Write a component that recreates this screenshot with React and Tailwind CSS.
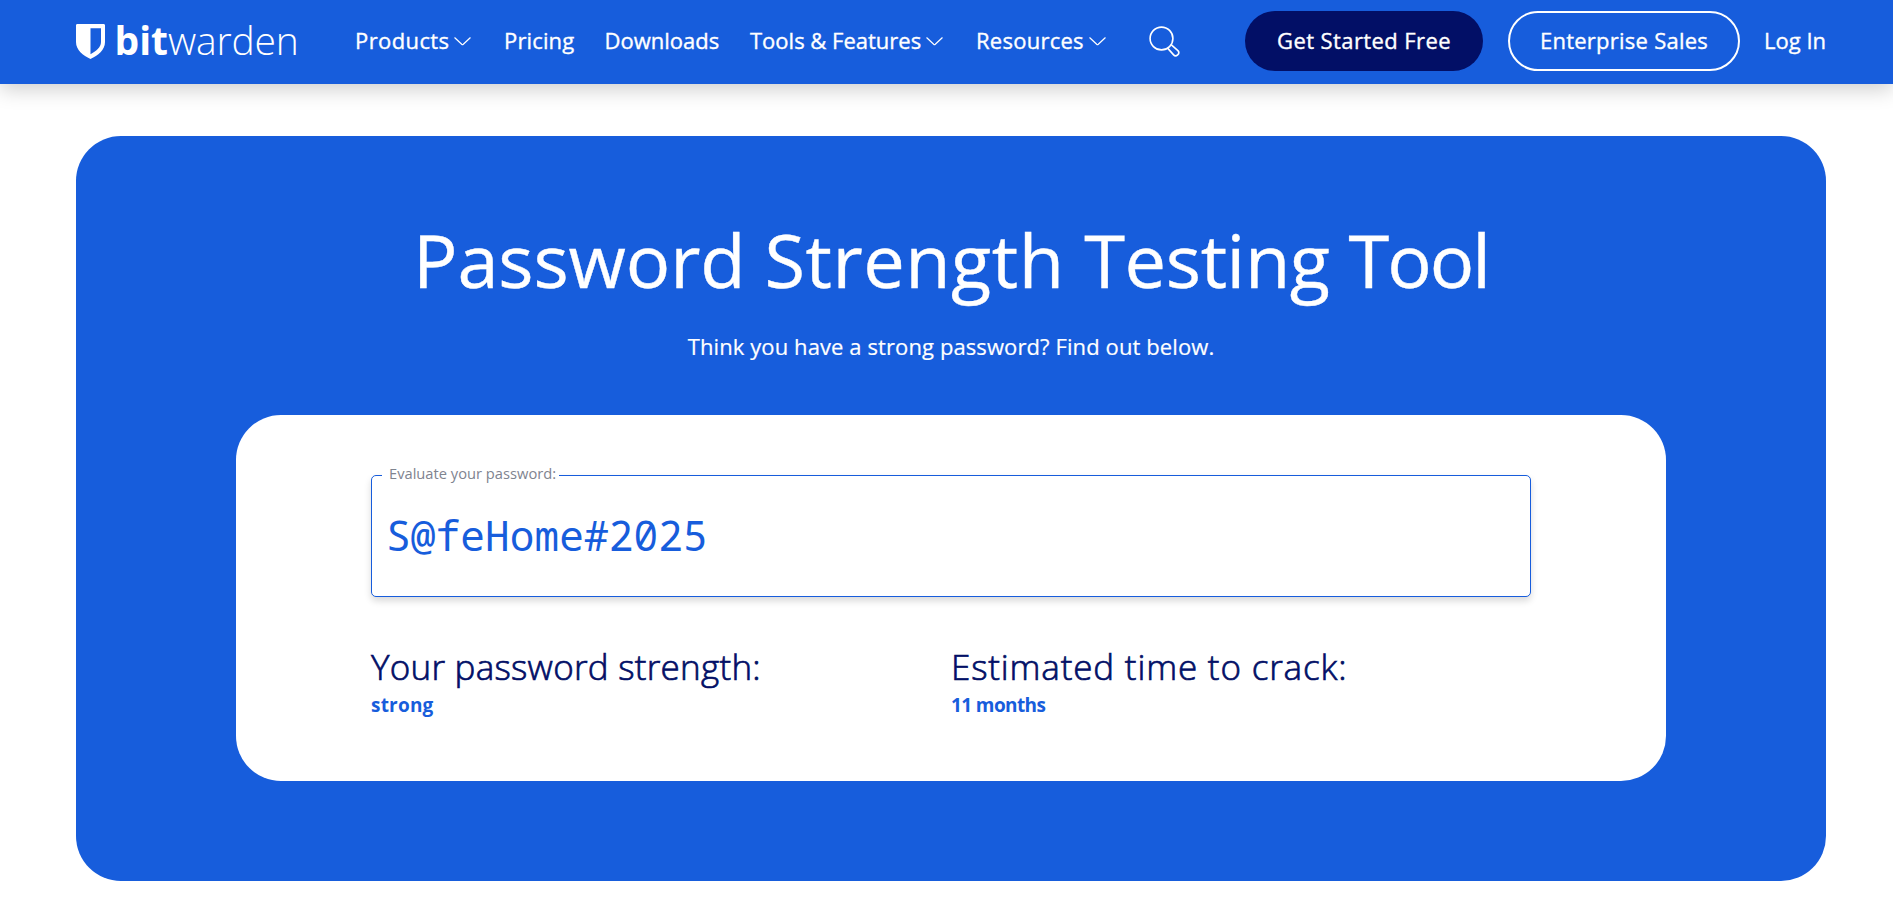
function Logo() {
  return (
    <a className="flex w-[221px] items-center whitespace-nowrap text-[39px] leading-[50px]">
      <svg className="mr-[9.5px] h-[35px] w-[29px] shrink-0" viewBox="0 0 29 35" fill="none">
        <path
          fillRule="evenodd"
          fill="white"
          d="M1.4 0H27.6C28.4 0 29 .6 29 1.4V18C29 26 22 31.600 14.500 35C7 31.600 0 26 0 18V1.400C0 .6.6 0 1.400 0ZM14.500 4.200V30.200C20 27.300 25 23.500 25 18V4.200Z"
        />
      </svg>
      <span className="-mt-[2px] font-bold">bit</span>
      <span className="-mt-[2px] font-light tracking-[-0.2px]">warden</span>
    </a>
  )
}

function Chevron() {
  return (
    <svg className="ml-[5px] h-[9px] w-[17px] shrink-0" viewBox="0 0 17 9" fill="none">
      <path d="M.8.8 7.700 7.300a1.200 1.200 0 0 0 1.600 0L16.200.8" stroke="white" strokeWidth="1.200" strokeLinecap="round" />
    </svg>
  )
}

function SearchIcon() {
  return (
    <svg className="h-[31px] w-[31px] shrink-0" viewBox="0 0 31 31" fill="none" stroke="white" strokeWidth="1.600">
      <circle cx="12.500" cy="12.500" r="11.400" />
      <path d="M18.600 22.100 24.400 28.600A2.900 2.900 0 0 0 28.900 24.600L22.100 18.600" strokeLinejoin="round" />
    </svg>
  )
}

function NavItem({ label, menu, className }) {
  return (
    <a className={`flex items-center ${className}`}>
      <span className="-mt-[2px]">{label}</span>
      {menu && <Chevron />}
    </a>
  )
}

function Result({ title, value, titleClass, valueClass }) {
  return (
    <div className="w-1/2">
      <h2 className={`text-[35px] leading-[46px] font-light whitespace-nowrap text-[#020f66] [-webkit-text-stroke:0.7px_#020f66] ${titleClass}`}>
        {title}
      </h2>
      <p className={`mt-[3px] text-[19px] leading-6 font-bold text-[#175ddc] ${valueClass}`}>{value}</p>
    </div>
  )
}

export default function App() {
  return (
    <div className="h-[912px] w-full overflow-hidden bg-white font-['Open_Sans',sans-serif]">
      <header className="relative flex h-[84px] items-center bg-[#175ddc] pb-[2px] pl-[76px] text-[22px] leading-[30px] font-medium whitespace-nowrap text-white shadow-[0_5px_20px_rgba(0,0,0,0.2)]">
        <Logo />
        <nav className="ml-[58px] flex items-center [-webkit-text-stroke:0.35px_white]">
          <NavItem label="Products" menu className="w-[149px] tracking-[0.4px]" />
          <NavItem label="Pricing" className="w-[100.5px] tracking-[0.15px]" />
          <NavItem label="Downloads" className="w-[145.5px]" />
          <NavItem label="Tools & Features" menu className="w-[226px]" />
          <NavItem label="Resources" menu className="w-[172.5px] tracking-[0.25px]" />
          <SearchIcon />
        </nav>
        <a className="ml-[65.5px] flex h-[60px] w-[238px] items-center justify-center rounded-full bg-[#020f66] pb-[2px] tracking-[0.4px] [-webkit-text-stroke:0.35px_white]">
          Get Started Free
        </a>
        <a className="ml-[25px] flex h-[60px] w-[232px] items-center justify-center rounded-full border-2 border-white pb-[2px] tracking-[0.25px] [-webkit-text-stroke:0.35px_white]">
          Enterprise Sales
        </a>
        <a className="-mt-[2px] ml-[24px] [-webkit-text-stroke:0.35px_white]">Log In</a>
      </header>
      <main className="mt-[52px] ml-[76px] flex h-[745px] w-[1750px] flex-col items-center rounded-[45px] bg-[#175ddc] pt-[84px] text-white">
        <h1 className="text-[74px] leading-[79px] tracking-[-0.15px] whitespace-nowrap [-webkit-text-stroke:0.4px_white]">
          Password <span className="tracking-[0.5px]">Strength </span>
          <span className="tracking-[-0.4px]">Testing </span>
          <span className="tracking-[-2px]">Tool</span>
        </h1>
        <p className="mt-8 text-[22px] leading-[30px] tracking-[0.1px] [-webkit-text-stroke:0.2px_white]">
          Think you have a strong password? Find out below.
        </p>
        <section className="mt-[54px] h-[366px] w-[1430px] rounded-[45px] bg-white px-[135px] pt-[60px]">
          <div className="relative flex h-[122px] items-center rounded-[5px] border border-[#175ddc] bg-white pb-[2px] pl-[14px] shadow-[0_4px_7px_rgba(0,0,0,0.15)]">
            <label className="absolute top-[-13px] left-[10px] w-[177px] bg-white pl-[7px] text-[14.7px] leading-5 whitespace-nowrap text-[#7f8490]">
              Evaluate your password:
            </label>
            <span className="font-['Noto_Sans_Mono',monospace] text-[41px] leading-[56px] tracking-[0.15px] text-[#175ddc]">S@feHome#2025</span>
          </div>
          <div className="mt-[47px] flex">
            <Result title="Your password strength:" value="strong" titleClass="tracking-[0.25px]" valueClass="tracking-[0.2px]" />
            <Result title="Estimated time to crack:" value="11 months" titleClass="tracking-[0.83px]" valueClass="tracking-[-0.6px]" />
          </div>
        </section>
      </main>
    </div>
  )
}
